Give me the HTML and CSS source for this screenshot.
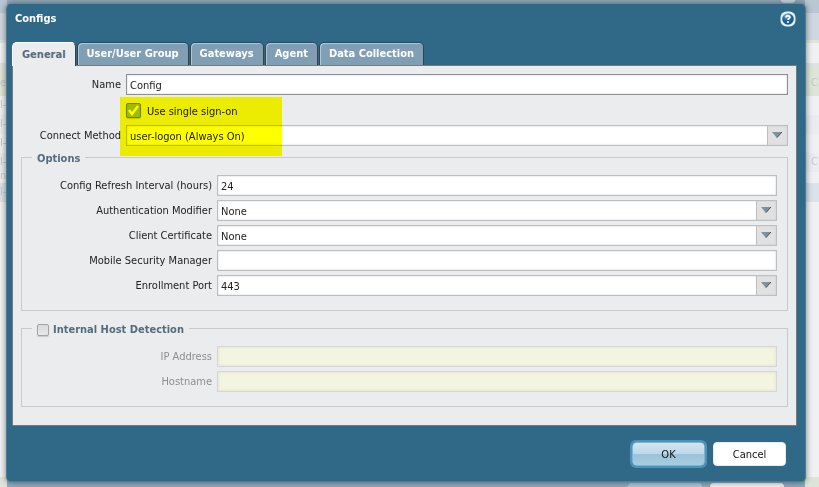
FILE: index.html
```html
<!DOCTYPE html>
<html lang="en">
<head>
    <meta charset="UTF-8">
    <meta name="viewport" content="width=device-width, initial-scale=1.0">
    <title>Configs</title>
    <link rel="stylesheet" href="styles.css">
</head>
<body>
    <!-- Masked page behind the dialog -->
    <div class="backdrop" aria-hidden="true">
        <div class="row row-header"></div>
        <div class="row row-title"></div>
        <div class="row row-toolbar"></div>
        <div class="row row-columns"><span>e</span><span>C</span></div>
        <div class="row"><span>l-</span></div>
        <div class="row row-alt"><span>l-</span></div>
        <div class="row"><span>l-</span></div>
        <div class="row row-alt"><span>l-</span><span>C</span></div>
        <div class="row row-wrap"><span>na</span></div>
        <div class="row row-selected"><span>l-</span></div>
        <div class="row-rest"></div>
        <div class="row row-footer"></div>
        <div class="parent-window">
            <span class="parent-help"></span>
            <div class="parent-buttons"><span></span><span></span></div>
        </div>
    </div>

    <form class="dialog" onsubmit="return false">
        <header class="dialog-header">
            <h1>Configs</h1>
            <button type="button" class="help" aria-label="Help">
                <svg width="16" height="16" viewBox="0 0 16 16">
                    <defs>
                        <radialGradient id="ball" cx="0.4" cy="0.2" r="0.85">
                            <stop offset="0" stop-color="#8db9d6"/>
                            <stop offset="0.5" stop-color="#1c6699"/>
                            <stop offset="1" stop-color="#0d5a8f"/>
                        </radialGradient>
                    </defs>
                    <rect x="0.5" y="0.5" width="15" height="15" rx="6" fill="#e9f1f8"/>
                    <circle cx="8" cy="8" r="5.8" fill="url(#ball)"/>
                    <path d="M6 6.6C6 4.4 10 4.4 9.9 6.3C9.8 7.6 8.1 7.4 8 9" fill="none" stroke="#fff" stroke-width="1.8"/>
                    <circle cx="8" cy="10.9" r="1" fill="#fff"/>
                </svg>
            </button>
        </header>

        <nav class="tabs" role="tablist">
            <button type="button" class="tab active" role="tab" aria-selected="true">General</button>
            <button type="button" class="tab" role="tab">User/User Group</button>
            <button type="button" class="tab" role="tab">Gateways</button>
            <button type="button" class="tab" role="tab">Agent</button>
            <button type="button" class="tab" role="tab">Data Collection</button>
        </nav>

        <div class="panel">
            <div class="field main">
                <label for="name">Name</label>
                <input type="text" id="name" class="focus" value="Config">
            </div>
            <div class="field main check-field">
                <span></span>
                <div class="check-row">
                    <input type="checkbox" id="sso" checked>
                    <label for="sso">Use single sign-on</label>
                </div>
            </div>
            <div class="field main">
                <label for="method">Connect Method</label>
                <select id="method">
                    <option>user-logon (Always On)</option>
                </select>
            </div>
            <div class="highlight"></div>

            <fieldset>
                <legend>Options</legend>
                <div class="field">
                    <label for="refresh">Config Refresh Interval (hours)</label>
                    <input type="text" id="refresh" value="24">
                </div>
                <div class="field">
                    <label for="auth">Authentication Modifier</label>
                    <select id="auth"><option>None</option></select>
                </div>
                <div class="field">
                    <label for="cert">Client Certificate</label>
                    <select id="cert"><option>None</option></select>
                </div>
                <div class="field">
                    <label for="msm">Mobile Security Manager</label>
                    <input type="text" id="msm">
                </div>
                <div class="field">
                    <label for="port">Enrollment Port</label>
                    <select id="port"><option>443</option></select>
                </div>
            </fieldset>

            <fieldset class="host">
                <legend>
                    <input type="checkbox" id="internal">
                    <label for="internal">Internal Host Detection</label>
                </legend>
                <div class="field disabled">
                    <label for="ip">IP Address</label>
                    <input type="text" id="ip" disabled>
                </div>
                <div class="field disabled">
                    <label for="hostname">Hostname</label>
                    <input type="text" id="hostname" disabled>
                </div>
            </fieldset>
        </div>

        <footer class="actions">
            <button type="submit" class="btn primary">OK</button>
            <button type="button" class="btn">Cancel</button>
        </footer>
    </form>
</body>
</html>
```
FILE: styles.css
```css
* {
    box-sizing: border-box;
}

body {
    margin: 0;
    min-height: 100vh;
    padding: 4px 13px 5px 6px;
    overflow: hidden;
    background: #f0f1f3;
    color: #222;
    font-family: "DejaVu Sans Condensed", "Noto Sans", sans-serif;
    font-size: 11px;
    line-height: 14px;
}

button,
input,
select {
    margin: 0;
    color: inherit;
    font: inherit;
}

/* Backdrop */
.backdrop {
    position: absolute;
    inset: 0;
    display: flex;
    flex-direction: column;
    color: #c3c8cc;
}

.row {
    display: flex;
    justify-content: space-between;
    height: 19px;
    padding-top: 2px;
    overflow: hidden;
}

.row span:last-child:not(:first-child) {
    width: 8px;
}

.row-header {
    height: 13px;
    background: #b8c7d3;
}

.row-title {
    height: 27px;
    background: #cfd8e1;
}

.row-toolbar {
    height: 29px;
    border-top: 3px solid #dfe4d7;
    border-bottom: 6px solid #dfe3df;
}

.row-columns {
    height: 27px;
    padding-top: 7px;
    background: #dfe4d9;
}

.row-alt {
    background: #ebecf0;
}

.row-wrap {
    height: 11px;
    padding-top: 0;
    line-height: 8px;
}

.row-selected {
    background: #dbe2e9;
}

.row-rest {
    flex: 1;
}

.row-footer {
    height: 10px;
    background: #dfe4d9;
}

.parent-window {
    position: absolute;
    inset: 0 14px 0 7px;
    display: flex;
    flex-direction: column;
    justify-content: space-between;
    align-items: flex-end;
    background: #8fabbd;
}

.parent-help {
    width: 14px;
    height: 3px;
    margin-right: 10px;
    border-radius: 0 0 7px 7px;
    background: #c5d5e0;
}

.parent-buttons {
    display: flex;
    gap: 8px;
    height: 4px;
    padding-right: 21px;
}

.parent-buttons span {
    width: 74px;
    border-radius: 4px 4px 0 0;
    background: #eef0f1;
}

.parent-buttons span:first-child {
    background: #a9c8d8;
}

/* Dialog */
.dialog {
    position: relative;
    padding: 0 8px 15px 5px;
    border: 1px solid #4c7d98;
    border-top-color: #306988;
    border-radius: 5px;
    background: #306988;
    box-shadow: 0 0 6px rgba(0, 0, 0, 0.5);
}

.dialog-header {
    display: flex;
    justify-content: space-between;
    padding: 6px 1px 0 3px;
    height: 37px;
}

.dialog-header h1 {
    margin: 0;
    color: #fff;
    font-size: 11px;
    line-height: 16px;
}

.help {
    width: 16px;
    height: 16px;
    padding: 0;
    border: 0;
    background: none;
}

.help svg {
    display: block;
}

/* Tabs */
.tabs {
    display: flex;
    gap: 1px;
}

.tab {
    height: 23px;
    padding: 0 9px;
    border: 1px solid #33444f;
    border-top-color: #1f4a63;
    border-bottom: 0;
    border-radius: 5px 5px 0 0;
    background: #819fb4;
    box-shadow: inset 1px 1px #b4c8d5;
    color: #fff;
    font-weight: bold;
}

.tab.active {
    height: 24px;
    margin-bottom: -1px;
    border-color: #fff #33444f #fff #fff;
    background: #ebecee;
    box-shadow: none;
    color: #566b7b;
    z-index: 1;
}

/* Panel */
.panel {
    position: relative;
    padding: 8px 8px 18px;
    border: 1px solid #77797b;
    background: #ebecee;
}

.field {
    display: grid;
    grid-template-columns: 190px 1fr;
    column-gap: 5px;
    height: 25px;
}

.field.main {
    grid-template-columns: 100px 1fr;
}

.field.check-field {
    height: 26px;
}

.field > label {
    padding-top: 4px;
    text-align: right;
}

.field input[type="text"],
select {
    width: 100%;
    height: 21px;
    padding: 2px 3px 0;
    border: 1px solid #bcbec0;
    border-radius: 0;
    outline: 0;
    background-color: #fff;
    box-shadow: inset 0 0 2px #c8c8c8;
}

.field input.focus {
    border-color: #8e8f91;
}

select {
    appearance: none;
    background-image: url("data:image/svg+xml,%3Csvg xmlns='http://www.w3.org/2000/svg' width='20' height='19'%3E%3Cpath fill='%23e1e1e1' d='M0 0h20v19H0z'/%3E%3Cpath fill='%23bcbec0' d='M0 0h1v19H0z'/%3E%3Cpath fill='%237f919b' d='M5 6h10l-5 6z'/%3E%3Cpath stroke='%23405a6b' d='M15 6l-5 5.500'/%3E%3C/svg%3E");
    background-position: right top;
    background-repeat: no-repeat;
}

.check-row {
    display: flex;
    gap: 6px;
    padding-top: 4px;
}

.check-row label {
    padding-top: 2px;
}

input[type="checkbox"] {
    appearance: none;
    width: 12px;
    height: 12px;
    border: 1px solid #a3a4a6;
    border-radius: 2px;
    background: linear-gradient(#d9d9da, #e8e8e9);
    box-shadow: 0 1px 1px #c6c7c9;
}

.check-row input[type="checkbox"] {
    width: 15px;
    height: 15px;
    border-color: #77807c;
    background: #9fbb9c url("data:image/svg+xml,%3Csvg xmlns='http://www.w3.org/2000/svg' width='13' height='13'%3E%3Cpath fill='none' stroke='%23fff' stroke-width='2.400' d='M2 6l3 4 6-8'/%3E%3C/svg%3E") no-repeat;
}

.highlight {
    position: absolute;
    top: 31px;
    left: 107px;
    width: 162px;
    height: 59px;
    background: #ff0;
    mix-blend-mode: multiply;
    pointer-events: none;
}

/* Groups */
fieldset {
    min-width: 0;
    height: 163px;
    margin: -2px 0 10px;
    padding: 9px 10px 0;
    border: 1px solid #c9cacd;
}

fieldset .field {
    margin-left: -10px;
}

legend {
    display: flex;
    align-items: center;
    gap: 4px;
    padding: 4px 5px 0;
    color: #566b7b;
    font-weight: bold;
}

fieldset.host {
    height: 88px;
    margin-bottom: 0;
}

.disabled {
    color: #8d8e90;
}

.field.disabled input {
    border-color: #d5d6d6;
    background-color: #f4f5e0;
    box-shadow: inset 0 0 3px #dcdccb;
}

/* Buttons */
.actions {
    display: flex;
    justify-content: flex-end;
    gap: 8px;
    padding: 16px 11px 0 0;
}

.btn {
    width: 73px;
    height: 24px;
    padding: 2px 0 0;
    border: 1px solid #e6edf2;
    border-radius: 4px;
    background: #fff;
    color: #111;
}

.btn.primary {
    border-color: #7fb3cf;
    background: linear-gradient(#d3e5ef, #bcd8e6 50%, #98c3da 50%, #a8cde0);
    box-shadow: 0 0 0 2px #4d94bb;
}
```
